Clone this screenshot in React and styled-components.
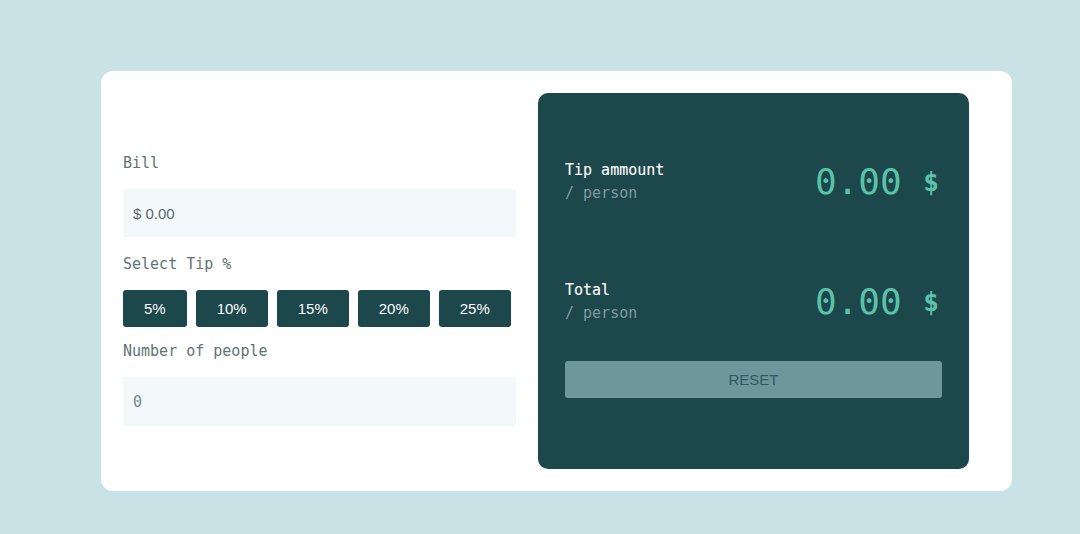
import React from 'react';
import styled, { createGlobalStyle } from 'styled-components';

const GlobalStyle = createGlobalStyle`
    * { box-sizing: border-box; }
    body {
        margin: 0;
        background: #c9e2e5;
        font-family: "DejaVu Sans Mono", "Liberation Mono", monospace;
    }
`
const Page = styled.div`
    width: 1080px;
    height: 534px;
    padding: 71px 0 0 101px;
`
const Card = styled.div`
    width: 911px;
    height: 420px;
    background: #fff;
    border-radius: 12px;
    padding: 22px 43px 22px 22px;
    display: flex;
    gap: 22px;
`
const Left = styled.div`
    width: 393px;
    padding-top: 60px;
    display: flex;
    flex-direction: column;
`
const Label = styled.div`
    font-size: 15px;
    line-height: 20px;
    color: #5e7476;
    margin-bottom: ${p => p.$mb || 16}px;
`
const Input = styled.div`
    height: ${p => p.$h || 48}px;
    background: #f3f8fb;
    border-radius: 3px;
    padding-left: 10px;
    display: flex;
    align-items: center;
    font-family: ${p => p.$mono ? '"DejaVu Sans Mono", monospace' : '"Liberation Sans", Arial, sans-serif'};
    font-size: 15px;
    color: ${p => p.$mono ? '#7b8a8b' : '#5d6869'};
    margin-bottom: 17px;
`
const Tips = styled.div`
    display: flex;
    gap: 9px;
    margin-bottom: 14px;
`
const TipButton = styled.button`
    height: 37px;
    padding: 0 21px;
    border: none;
    border-radius: 3px;
    background: #1c474b;
    color: #fff;
    font-family: "Liberation Sans", Arial, sans-serif;
    font-size: 15px;
`
const Panel = styled.div`
    width: 431px;
    background: #1c474b;
    border-radius: 10px;
    padding: 67px 27px 0;
    display: flex;
    flex-direction: column;
`
const Row = styled.div`
    display: flex;
    align-items: center;
    justify-content: space-between;
    margin-bottom: ${p => p.$mb}px;
`
const RowText = styled.div`
    display: flex;
    flex-direction: column;
    gap: 3px;
`
const RowTitle = styled.div`
    font-size: 15px;
    line-height: 20px;
    color: #fff;
    -webkit-text-stroke: 0.1px #fff;
`
const RowSub = styled.div`
    font-size: 15px;
    line-height: 20px;
    color: #7f9c9f;
`
const Amount = styled.div`
    font-size: 36px;
    line-height: 40px;
    color: #5bc2aa;
    padding-right: 3px;
    white-space: pre;
`
const Dollar = styled.span`
    font-size: 26px;
    font-weight: bold;
    vertical-align: 3px;
`
const Reset = styled.button`
    height: 37px;
    border: none;
    border-radius: 3px;
    background: #6e979b;
    color: #2d5b5f;
    font-family: "Liberation Sans", Arial, sans-serif;
    font-size: 15px;
`

const tips = ['5%', '10%', '15%', '20%', '25%']

const App = () => {
    return (
        <Page>
            <GlobalStyle />
            <Card>
                <Left>
                    <Label>Bill</Label>
                    <Input>$ 0.00</Input>
                    <Label>Select Tip %</Label>
                    <Tips>
                        {tips.map(t => <TipButton key={t}>{t}</TipButton>)}
                    </Tips>
                    <Label>Number of people</Label>
                    <Input $mono $h={49}>0</Input>
                </Left>
                <Panel>
                    <Row $mb={77}>
                        <RowText>
                            <RowTitle>Tip ammount</RowTitle>
                            <RowSub>/ person</RowSub>
                        </RowText>
                        <Amount>0.00 <Dollar>$</Dollar></Amount>
                    </Row>
                    <Row $mb={38}>
                        <RowText>
                            <RowTitle>Total</RowTitle>
                            <RowSub>/ person</RowSub>
                        </RowText>
                        <Amount>0.00 <Dollar>$</Dollar></Amount>
                    </Row>
                    <Reset>RESET</Reset>
                </Panel>
            </Card>
        </Page>
    )
}

export default App
